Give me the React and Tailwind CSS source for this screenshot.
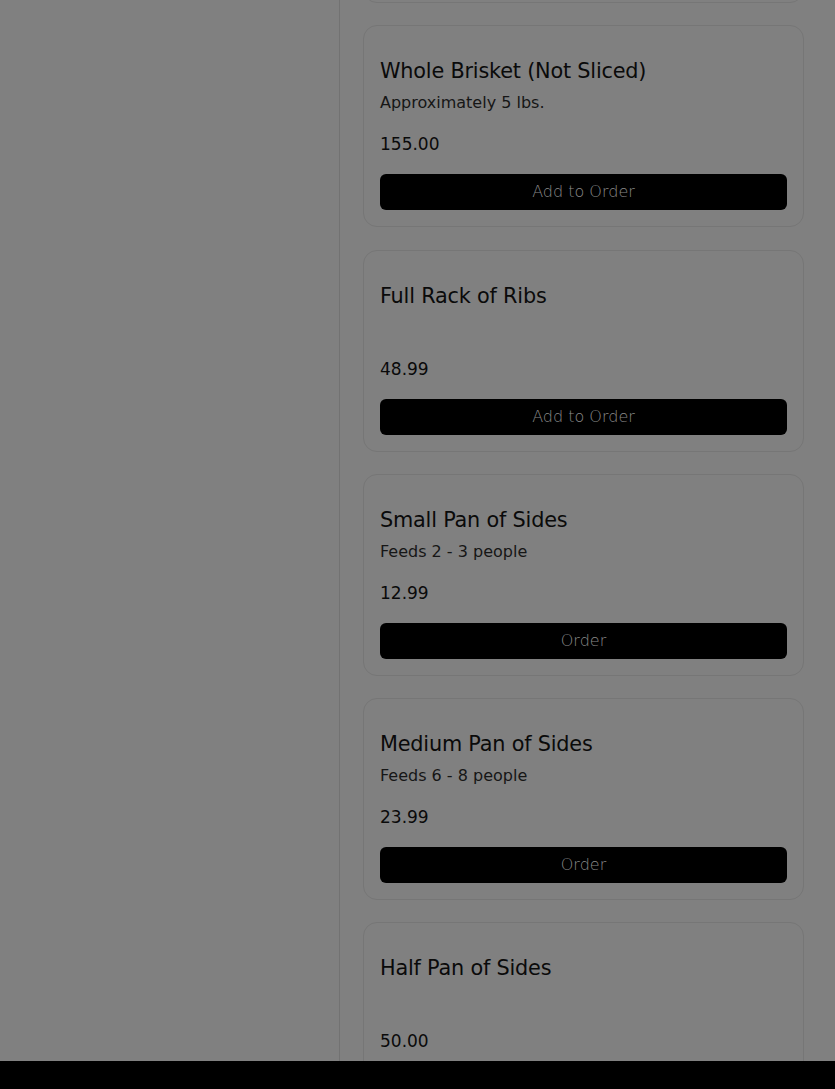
const items = [
    { name: 'Half Brisket (Sliced)', desc: 'Approximately 2.5 lbs.', price: '80.00', action: 'Add to Order' },
    { name: 'Whole Brisket (Not Sliced)', desc: 'Approximately 5 lbs.', price: '155.00', action: 'Add to Order' },
    { name: 'Full Rack of Ribs', desc: '', price: '48.99', action: 'Add to Order' },
    { name: 'Small Pan of Sides', desc: 'Feeds 2 - 3 people', price: '12.99', action: 'Order' },
    { name: 'Medium Pan of Sides', desc: 'Feeds 6 - 8 people', price: '23.99', action: 'Order' },
    { name: 'Half Pan of Sides', desc: '', price: '50.00', action: 'Order' },
];

const MenuCard = ({ item }) => (
    <div className="rounded-[14px] border border-[#767676] px-4 pt-[31px] pb-4">
        <h3 className="text-[20.8px] leading-[28px] font-medium text-[#0a0a0a] tracking-[-0.2px]">
            {item.name}
        </h3>
        <p className="mt-[6px] text-[16px] leading-[24px] text-[#161616] h-6">{item.desc}</p>
        <p className="mt-[15px] text-[17px] leading-[28px] font-medium text-[#0a0a0a]">{item.price}</p>
        <button
            type="button"
            className="mt-4 w-full h-9 rounded-md bg-black text-[16px] text-[#8a8a8a] font-light"
        >
            {item.action}
        </button>
    </div>
);

export default function App() {
    return (
        <div
            className="h-screen overflow-hidden flex bg-[#808080]"
            style={{ fontFamily: '"DejaVu Sans", sans-serif' }}
        >
            {/* left panel */}
            <div className="w-[340px] shrink-0 border-r border-[#727272]" />

            {/* menu list */}
            <div className="pl-[23px] w-[464px]">
                <div className="mt-[-199px] flex flex-col gap-[22.3px]">
                    {items.map((item) => (
                        <MenuCard key={item.name} item={item} />
                    ))}
                </div>
            </div>

            {/* bottom bar */}
            <div className="fixed inset-x-0 bottom-0 h-[28px] bg-black" />
        </div>
    );
}
